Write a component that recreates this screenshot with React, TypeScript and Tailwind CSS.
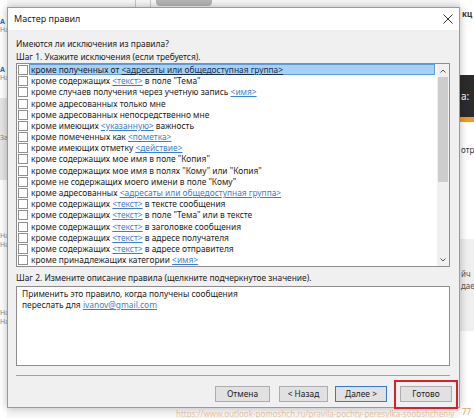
import React from 'react';

type Part = string | { link: string };

const rules: Part[][] = [
  ['кроме полученных от ', { link: '<адресаты или общедоступная группа>' }],
  ['кроме содержащих ', { link: '<текст>' }, ' в поле "Тема"'],
  ['кроме случаев получения через учетную запись ', { link: '<имя>' }],
  ['кроме адресованных только мне'],
  ['кроме адресованных непосредственно мне'],
  ['кроме имеющих ', { link: '<указанную>' }, ' важность'],
  ['кроме помеченных как ', { link: '<пометка>' }],
  ['кроме имеющих отметку ', { link: '<действие>' }],
  ['кроме содержащих мое имя в поле "Копия"'],
  ['кроме содержащих мое имя в полях "Кому" или "Копия"'],
  ['кроме не содержащих моего имени в поле "Кому"'],
  ['кроме адресованных ', { link: '<адресаты или общедоступная группа>' }],
  ['кроме содержащих ', { link: '<текст>' }, ' в тексте сообщения'],
  ['кроме содержащих ', { link: '<текст>' }, ' в поле "Тема" или в тексте'],
  ['кроме содержащих ', { link: '<текст>' }, ' в заголовке сообщения'],
  ['кроме содержащих ', { link: '<текст>' }, ' в адресе получателя'],
  ['кроме содержащих ', { link: '<текст>' }, ' в адресе отправителя'],
  ['кроме принадлежащих категории ', { link: '<имя>' }],
];

function RuleRow({ parts, selected }: { parts: Part[]; selected?: boolean }) {
  return (
    <div className="flex h-[11.2px] items-center">
      <span className="ml-[1px] h-[10px] w-[10px] shrink-0 border border-[#8f8f8f] bg-white" />
      <span
        className={
          selected
            ? 'ml-[1px] mr-[2px] flex h-[11px] flex-1 items-center border border-[#5a9ee0] bg-[#a7d0f4] pl-[1px]'
            : 'ml-[1px] flex h-[11px] flex-1 items-center border border-transparent pl-[1px]'
        }
      >
        <span className="whitespace-pre">
          {parts.map((p, i) =>
            typeof p === 'string' ? (
              <span key={i}>{p}</span>
            ) : (
              <span
                key={i}
                className={selected ? 'text-[#1b2f4a] underline' : 'text-[#3d7fc9] underline'}
              >
                {p.link}
              </span>
            )
          )}
        </span>
      </span>
    </div>
  );
}

function Btn({ label, w, focus }: { label: string; w: string; focus?: boolean }) {
  return (
    <div
      className={`flex h-[16px] items-center justify-center border bg-[#e1e1e1] ${w} ${
        focus ? 'border-[#2f7fd1]' : 'border-[#adadad]'
      }`}
    >
      {label}
    </div>
  );
}

export default function App() {
  return (
    <div
      className="relative h-[418px] w-[474px] overflow-hidden bg-[#f7f7f7] text-[8.4px] text-[#1c1c1c]"
      style={{ fontFamily: '"Noto Sans", "Open Sans", sans-serif' }}
    >
      {/* outlook window behind the dialog */}
      <div className="absolute left-[135px] top-0 h-[7px] w-px bg-[#c8c8c8]" />
      <div className="absolute left-[150px] top-0 h-[7px] w-px bg-[#c8c8c8]" />
      <div className="absolute left-[156px] top-0 h-[6px] w-[56px] rounded-b-[4px] bg-[#b5b5b5]" />

      <div className="absolute left-0 top-0 flex h-[418px] w-[7px] flex-col bg-white text-[7px] leading-[8px]">
        <div className="mt-[18px] font-bold text-[#2a6ebb]">A</div>
        <div className="text-[#888]">На</div>
        <div className="mt-[32px] font-bold text-[#2a6ebb]">A</div>
        <div className="text-[#888]">На</div>
        <div className="mt-[16px] h-[82px] bg-[#e6e6e6] pt-[36px] text-[#888]">За</div>
        <div className="mt-[52px] text-[#888]">На</div>
        <div className="mt-[1px] text-[#888]">На</div>
        <div className="mt-[60px] text-[#888]">На</div>
        <div className="mt-[1px] text-[#888]">На</div>
      </div>

      <div className="absolute right-0 top-0 flex h-[418px] w-[14px] flex-col bg-white text-[8px] leading-[9px]">
        <div className="mt-[9px] pl-[2px] font-bold text-[#333]">кц</div>
        <div className="mt-[57px] flex h-[42px] items-center bg-[#2b2b2b] pl-[1px] text-[10px] text-white">а:</div>
        <div className="h-[5px] bg-[#f39a1e]" />
        <div className="mt-[23px] pl-[1px] text-[#333]">отр</div>
        <div className="mt-[85px] h-[92px] bg-[#efefef] pl-[1px] pt-[30px] text-[#555]">
          <div>йч</div>
          <div className="mt-[3px]">дае</div>
        </div>
        <div className="mt-[76px] pl-[2px] text-[#e0a060]">77</div>
      </div>

      <div className="absolute left-[176px] top-[408px] whitespace-nowrap text-[8px] text-[#e8a560] opacity-60">
        https://www.outlook-pomoshch.ru/pravila-pochty-peresylka-soobshcheniy
      </div>

      {/* dialog */}
      <div className="absolute left-[7px] top-[7px] flex h-[401px] w-[453px] flex-col border border-[#9a9a9a] bg-[#f0f0f0] shadow-[0_0_8px_rgba(0,0,0,0.28)]">
        <div className="flex h-[22px] items-center justify-between bg-white pl-[6px] pr-[5px] text-[9px]">
          <span>Мастер правил</span>
          <svg width="10" height="10" viewBox="0 0 10 10" className="mr-[1px]">
            <path d="M0.5 0.5 L9.5 9.5 M9.5 0.5 L0.5 9.5" stroke="#333" strokeWidth="1" />
          </svg>
        </div>

        <div className="flex flex-1 flex-col pl-[8px] pr-[7px] pt-[8px] leading-[12px]">
          <div className="h-[12px]">Имеются ли исключения из правила?</div>
          <div className="mt-[1px] h-[12px]">Шаг 1. Укажите исключения (если требуется).</div>

          <div className="mr-[2px] flex h-[204px] border border-[#8d8d8d] bg-white">
            <div className="flex flex-1 flex-col pt-[0.4px]">
              {rules.map((r, i) => (
                <RuleRow key={i} parts={r} selected={i === 0} />
              ))}
            </div>
            <div className="flex w-[12px] flex-col bg-[#f0f0f0]">
              <div className="flex h-[13px] items-center justify-center">
                <svg width="6" height="4" viewBox="0 0 6 4">
                  <path d="M0.5 3.5 L3 1 L5.5 3.5" stroke="#555" fill="none" />
                </svg>
              </div>
              <div className="mx-[1px] h-[105px] bg-[#cdcdcd]" />
              <div className="flex-1" />
              <div className="flex h-[13px] items-center justify-center">
                <svg width="6" height="4" viewBox="0 0 6 4">
                  <path d="M0.5 0.5 L3 3 L5.5 0.5" stroke="#555" fill="none" />
                </svg>
              </div>
            </div>
          </div>

          <div className="mt-[5px] h-[12px]">
            Шаг 2. Измените описание правила (щелкните подчеркнутое значение).
          </div>
          <div className="mr-[2px] mt-[2px] h-[80px] border border-[#8d8d8d] bg-white pl-[5px] pt-[1px] leading-[11px]">
            <div>Применить это правило, когда получены сообщения</div>
            <div>
              переслать для <span className="text-[#3d7fc9] underline">ivanov@gmail.com</span>
            </div>
          </div>

          <div className="mr-[2px] mt-[9px] h-px bg-[#a0a0a0]" />

          <div className="mt-[10px] flex justify-end">
            <Btn label="Отмена" w="w-[55px]" />
            <div className="ml-[9px]">
              <Btn label="< Назад" w="w-[49px]" />
            </div>
            <div className="ml-[7px]">
              <Btn label="Далее >" w="w-[52px]" focus />
            </div>
            <div className="relative ml-[13px]">
              <Btn label="Готово" w="w-[52px]" />
              <span className="absolute -bottom-[7px] -left-[6px] -right-[6px] -top-[6px] border-2 border-[#dc1f2a]" />
            </div>
          </div>
        </div>
      </div>
    </div>
  );
}
